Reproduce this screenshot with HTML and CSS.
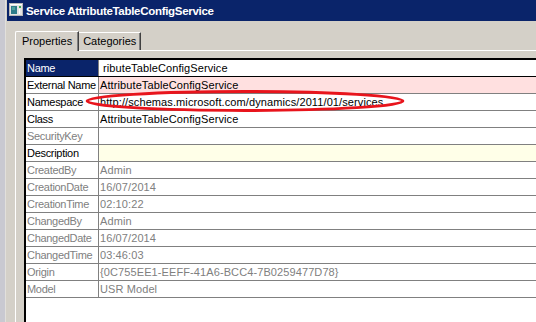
FILE: index.html
```html
<!DOCTYPE html>
<html lang="en">
<head>
    <meta charset="UTF-8">
    <title>Service AttributeTableConfigService</title>
    <link rel="stylesheet" href="styles.css">
</head>
<body>

<div class="desktop">
    <div class="edge"></div>
    <div class="window">
        <div class="titlebar">
            <svg class="app-icon" width="14" height="13" viewBox="0 0 14 13">
                <rect x="0.5" y="0.5" width="13" height="12" fill="#e4e4e4" stroke="#b8b8b8"/>
                <rect x="1" y="1" width="12" height="1" fill="#ffffff"/>
                <rect x="2" y="3" width="6" height="8" fill="#2e7c8a"/>
                <rect x="3" y="4" width="3" height="3" fill="#4fa3a0"/>
                <rect x="10" y="3" width="2" height="2" fill="#3caa5a"/>
                <rect x="10" y="6" width="1" height="5" fill="#ffffff"/>
            </svg>
            <span class="title">Service AttributeTableConfigService</span>
        </div>

        <div class="tabs">
            <div class="tab active">Properties</div>
            <div class="tab">Categories</div>
        </div>

        <div class="panel">
            <div class="grid">
                <div class="row head">
                    <div class="key">Name</div>
                    <div class="val edit">ributeTableConfigService</div>
                </div>
                <div class="row">
                    <div class="key">External Name</div>
                    <div class="val pink">AttributeTableConfigService</div>
                </div>
                <div class="row">
                    <div class="key">Namespace</div>
                    <div class="val">http://schemas.microsoft.com/dynamics/2011/01/services</div>
                </div>
                <div class="row">
                    <div class="key">Class</div>
                    <div class="val">AttributeTableConfigService</div>
                </div>
                <div class="row off">
                    <div class="key">SecurityKey</div>
                    <div class="val"></div>
                </div>
                <div class="row">
                    <div class="key">Description</div>
                    <div class="val yellow"></div>
                </div>
                <div class="row off">
                    <div class="key">CreatedBy</div>
                    <div class="val">Admin</div>
                </div>
                <div class="row off">
                    <div class="key">CreationDate</div>
                    <div class="val">16/07/2014</div>
                </div>
                <div class="row off">
                    <div class="key">CreationTime</div>
                    <div class="val">02:10:22</div>
                </div>
                <div class="row off">
                    <div class="key">ChangedBy</div>
                    <div class="val">Admin</div>
                </div>
                <div class="row off">
                    <div class="key">ChangedDate</div>
                    <div class="val">16/07/2014</div>
                </div>
                <div class="row off">
                    <div class="key">ChangedTime</div>
                    <div class="val">03:46:03</div>
                </div>
                <div class="row off">
                    <div class="key">Origin</div>
                    <div class="val">{0C755EE1-EEFF-41A6-BCC4-7B0259477D78}</div>
                </div>
                <div class="row off">
                    <div class="key">Model</div>
                    <div class="val">USR Model</div>
                </div>
            </div>
        </div>
    </div>
</div>

<!-- red marker drawn over the screenshot -->
<svg class="mark" width="340" height="30" viewBox="0 0 340 30">
    <ellipse cx="160" cy="12" rx="158" ry="9.5" fill="none" stroke="#e8141c" stroke-width="2.8"/>
</svg>

</body>
</html>
```

FILE: styles.css
```css
body {
    margin: 0;
    background-color: #d4d0c8;
    font-family: 'Liberation Sans', Arial, sans-serif;
    font-size: 11px;
    color: #000;
    overflow: hidden;
}

.desktop {
    display: flex;
    height: 322px;
}

.edge {
    width: 5px;
    background-color: #c9c9d1;
    border-right: 1px solid #e2e0dc;
}

.window {
    flex: 1;
    display: flex;
    flex-direction: column;
    padding-left: 1px;
}

.titlebar {
    height: 21px;
    background-color: #0a246a;
    display: flex;
    align-items: center;
    padding-left: 2px;
    gap: 3px;
}

.app-icon {
    flex: none;
    margin-top: -2px;
}

.title {
    color: #fff;
    font-weight: bold;
    font-size: 11.5px;
    letter-spacing: -0.3px;
}

/* tab strip */
.tabs {
    display: flex;
    align-items: flex-end;
    margin-top: 9px;
    padding-left: 8px;
    height: 20px;
}

.tab {
    height: 17px;
    padding: 0 4px 0 4px;
    line-height: 17px;
    border-top: 1px solid #fff;
    border-right: 1px solid #404040;
    box-shadow: inset -1px 0 0 #808080;
}

.tab.active {
    height: 19px;
    line-height: 19px;
    padding: 0 6px 0 6px;
    border-left: 1px solid #fff;
    border-radius: 2px 0 0 0;
    position: relative;
    z-index: 1;
    background-color: #d4d0c8;
    margin-bottom: -1px;
}

.panel {
    flex: 1;
    display: flex;
    border-top: 1px solid #fff;
    border-left: 1px solid #fff;
    margin-left: 8px;
    padding: 7px 0 0 8px;
}

/* property grid */
.grid {
    flex: 1;
    background-color: #fff;
    border-top: 2px solid #000;
    border-left: 2px solid #000;
}

.row {
    display: flex;
    height: 16px;
    line-height: 16px;
    border-bottom: 1px solid #808080;
    white-space: nowrap;
    overflow: hidden;
}

.row.head {
    border-bottom-color: #000;
}

.key {
    flex: none;
    width: 73px;
    padding-left: 1px;
    border-right: 1px solid #808080;
    box-sizing: border-box;
    letter-spacing: -0.3px;
    overflow: hidden;
}

.head .key {
    background-color: #0a246a;
    color: #fff;
}

.val {
    flex: 1;
    padding-left: 1px;
    letter-spacing: 0.1px;
}

.val.edit {
    padding-left: 4px;
}

.val.pink {
    background-color: #ffe0e0;
}

.val.yellow {
    background-color: #ffffe8;
}

.row.off {
    color: #808080;
}

.mark {
    position: absolute;
    left: 85px;
    top: 89px;
}
```
